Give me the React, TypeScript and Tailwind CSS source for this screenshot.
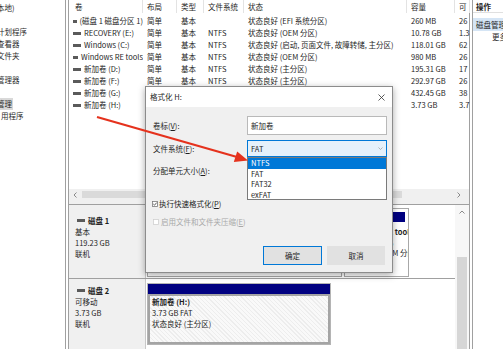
import React from 'react';

const rows: string[][] = [
  ['(磁盘 1 磁盘分区 1)', '简单', '基本', '', '状态良好 (EFI 系统分区)', '260 MB', '26'],
  ['RECOVERY (E:)', '简单', '基本', 'NTFS', '状态良好 (OEM 分区)', '10.78 GB', '1.3'],
  ['Windows (C:)', '简单', '基本', 'NTFS', '状态良好 (启动, 页面文件, 故障转储, 主分区)', '118.01 GB', '62'],
  ['Windows RE tools', '简单', '基本', 'NTFS', '状态良好 (OEM 分区)', '980 MB', '26'],
  ['新加卷 (D:)', '简单', '基本', 'NTFS', '状态良好 (主分区)', '195.31 GB', '17'],
  ['新加卷 (F:)', '简单', '基本', 'NTFS', '状态良好 (主分区)', '292.97 GB', '26'],
  ['新加卷 (G:)', '简单', '基本', 'NTFS', '状态良好 (主分区)', '432.45 GB', '38'],
  ['新加卷 (H:)', '简单', '基本', 'NTFS', '状态良好 (主分区)', '3.73 GB', '3.7'],
];

const headers = ['卷', '布局', '类型', '文件系统', '状态', '容量', '可'];

const treeItems = ['本地)', '', '计划程序', '查看器', '文件夹', '', '管理器', '', '管理', '用程序'];

function TreePane() {
  return (
    <div className="w-[65px] shrink-0 overflow-hidden pt-[2px] text-[#2a2a2a]">
      {treeItems.map((t, i) => (
        <div key={i} className="h-[12px] whitespace-nowrap">
          {t && (
            <span className={`inline-block ${i === 9 ? 'ml-[1px]' : '-ml-[3px]'} ${i === 8 ? 'bg-[#d9d9d9] pr-[1px]' : ''}`}>
              {t}
            </span>
          )}
        </div>
      ))}
    </div>
  );
}

function DiskIcon() {
  return <span className="inline-block w-[8px] h-[3px] bg-[#5a5a5a] mr-[3px] align-middle" />;
}

function VolumeList() {
  return (
    <>
      {/* Column headers */}
      <div className="h-[13px] grid grid-cols-[74px_34px_27px_40px_163px_48px_15px]">
        {headers.map((h, i) => (
          <div key={h} className={`border-r border-[#e3e3e3] leading-[13px] whitespace-nowrap overflow-hidden ${i === 0 ? 'pl-[6px]' : 'pl-[4px]'}`}>
            {h}
          </div>
        ))}
      </div>

      {/* Rows */}
      <div className="h-[176px] pt-[2px]">
        {rows.map((r, ri) => (
          <div key={ri} className="h-[12px] grid grid-cols-[74px_34px_27px_40px_163px_48px_15px]">
            {r.map((c, ci) => (
              <div key={ci} className="pl-[4px] whitespace-nowrap overflow-hidden flex items-center">
                {ci === 0 && <DiskIcon />}
                <span>{c}</span>
              </div>
            ))}
          </div>
        ))}
      </div>

      {/* Horizontal scrollbar */}
      <div className="h-[11px] bg-[#f0f0f0] flex items-center px-[4px] gap-[5px]">
        <svg width="4" height="6" viewBox="0 0 4 6">
          <path d="M3.5 0.5 L1 3 L3.5 5.5" fill="none" stroke="#8a8a8a" strokeWidth="1" />
        </svg>
        <div className="h-[7px] w-[320px] bg-[#dadada]" />
        <div className="flex-1" />
        <svg width="4" height="6" viewBox="0 0 4 6" className="mr-[4px]">
          <path d="M0.5 0.5 L3 3 L0.5 5.5" fill="none" stroke="#8a8a8a" strokeWidth="1" />
        </svg>
      </div>
      <div className="h-[5px] bg-[#f0f0f0] border-b border-[#a0a0a0]" />
    </>
  );
}

function DiskLabel({ name, lines, pt }: { name: string; lines: string[]; pt: string }) {
  return (
    <div className={`w-[77px] shrink-0 bg-[#f0f0f0] border-r border-[#c8c8c8] pl-[6px] ${pt} leading-[11px]`}>
      <div className="font-bold flex items-center pl-[2px]">
        <DiskIcon />
        <span>{name}</span>
      </div>
      {lines.map((l) => (
        <div key={l}>{l}</div>
      ))}
    </div>
  );
}

function DiskPane() {
  return (
    <div className="flex-1 flex min-h-0">
      <div className="flex-1 flex flex-col">
        {/* Disk 1 */}
        <div className="h-[74px] flex border-b border-[#a0a0a0] bg-white">
          <DiskLabel name="磁盘 1" lines={['基本', '119.23 GB', '联机']} pt="pt-[10px]" />
          <div className="flex pt-[3px] pb-[1px] pl-[1px] gap-[2px]">
            <div className="w-[195px] border border-[#a8a8a8] p-[3px]">
              <div className="h-[10px] bg-[#000080]" />
            </div>
            <div className="w-[65px] border border-[#a8a8a8] p-[3px] overflow-hidden">
              <div className="h-[10px] bg-[#000080]" />
              <div className="pt-[5px] leading-[10.5px] whitespace-nowrap">
                <div className="font-bold">Windows RE tools</div>
                <div>980 MB NTFS</div>
                <div>状态良好 (OEM 分区)</div>
              </div>
            </div>
          </div>
        </div>

        {/* Disk 2 */}
        <div className="flex-1 flex bg-white">
          <DiskLabel name="磁盘 2" lines={['可移动', '3.73 GB', '联机']} pt="pt-[6px]" />
          <div className="pt-[4px] pb-[4px] pl-[1px]">
            <div className="w-[184px] h-full border border-[#b4b4b4] flex flex-col">
              <div className="h-[10px] bg-[#000080] shrink-0" />
              <div className="flex-1 border-2 border-[#a4a4a4] pl-[2px] leading-[11px] bg-[repeating-linear-gradient(45deg,#ededed_0px,#ededed_1px,#f9f9f9_1px,#f9f9f9_3px)]">
                <div className="font-bold">新加卷 (H:)</div>
                <div>3.73 GB FAT</div>
                <div>状态良好 (主分区)</div>
              </div>
            </div>
          </div>
        </div>
      </div>

      {/* Vertical scrollbar */}
      <div className="w-[14px] bg-[#f7f7f7] flex flex-col items-center pt-[5px]">
        <svg width="6" height="4" viewBox="0 0 6 4">
          <path d="M0.5 3.5 L3 1 L5.5 3.5" fill="none" stroke="#8a8a8a" strokeWidth="1" />
        </svg>
        <div className="mt-[43px] w-[10px] flex-1 bg-[#d6d6d6]" />
      </div>
    </div>
  );
}

function MainPane() {
  return (
    <div className="w-[406px] shrink-0 flex border-l border-[#a0a0a0] pl-[2px]">
      <div className="w-[402px] flex flex-col border-l border-r border-[#a0a0a0]">
        <VolumeList />
        <DiskPane />
      </div>
    </div>
  );
}

function ActionPane() {
  return (
    <div className="ml-[1px] w-[31px] border-l border-[#a0a0a0] overflow-hidden whitespace-nowrap">
      <div className="h-[13px] leading-[13px] pl-[3px] font-bold border-b border-[#e0e0e0]">操作</div>
      <div className="mt-[5px] h-[13px] leading-[13px] pl-[3px] bg-[#d5e5f5]">磁盘管理</div>
      <div className="h-[12px] pl-[19px]">更多操作</div>
    </div>
  );
}

function CheckBox({ checked, disabled }: { checked?: boolean; disabled?: boolean }) {
  return (
    <svg width="6" height="6" viewBox="0 0 6 6" className="shrink-0">
      <rect x="0.5" y="0.5" width="5" height="5" fill="white" stroke={disabled ? '#d0d0d0' : '#7a7a7a'} strokeWidth="0.8" />
      {checked && <path d="M1.3 3 L2.5 4.2 L4.7 1.6" fill="none" stroke="#333" strokeWidth="0.8" />}
    </svg>
  );
}

function FormatDialog() {
  return (
    <div className="absolute left-[145px] top-[86px] w-[248px] h-[187px] border border-[#8c8c8c] bg-[#f0f0f0] shadow-[0_2px_7px_rgba(0,0,0,0.35)] flex flex-col">
      {/* Title bar */}
      <div className="h-[20px] shrink-0 bg-white flex items-center justify-between pl-[4px] pr-[7px]">
        <span>格式化 H:</span>
        <svg width="7" height="7" viewBox="0 0 7 7">
          <path d="M0.5 0.5 L6.5 6.5 M6.5 0.5 L0.5 6.5" stroke="#333" strokeWidth="0.8" />
        </svg>
      </div>

      <div className="relative flex-1 pl-[7px] pr-[5px]">
        <div className="mt-[9px] h-[19px] flex items-center">
          <div className="w-[94px]">卷标(<u>V</u>):</div>
          <div className="w-[140px] h-full bg-white border border-[#b9b9b9] pl-[3px] flex items-center">新加卷</div>
        </div>

        <div className="mt-[5px] h-[17px] flex items-center">
          <div className="w-[94px]">文件系统(<u>F</u>):</div>
          <div className="w-[140px] h-full bg-[#e5f1fb] border border-[#0078d7] pl-[3px] pr-[3px] flex items-center justify-between">
            <span>FAT</span>
            <svg width="5" height="3" viewBox="0 0 5 3">
              <path d="M0.5 0.5 L2.5 2.5 L4.5 0.5" fill="none" stroke="#9a9a9a" strokeWidth="0.7" />
            </svg>
          </div>
        </div>

        <div className="mt-[8px] h-[12px] flex items-center">分配单元大小(<u>A</u>):</div>

        <div className="mt-[21px] h-[12px] flex items-center gap-[1px] -ml-[1px]">
          <CheckBox checked />
          <span>执行快速格式化(<u>P</u>)</span>
        </div>

        <div className="mt-[6px] h-[12px] flex items-center gap-[2px] text-[#a8a8a8]">
          <CheckBox disabled />
          <span>启用文件和文件夹压缩(<u>E</u>)</span>
        </div>

        <div className="mt-[18px] h-[19px] flex justify-end gap-[5px] mr-[2px]">
          <div className="w-[59px] h-full bg-[#e1e1e1] border border-[#0078d7] flex items-center justify-center">确定</div>
          <div className="w-[58px] h-full bg-[#e1e1e1] border border-[#e1e1e1] flex items-center justify-center">取消</div>
        </div>

        {/* Open drop-down of the file system box */}
        <div className="absolute left-[101px] top-[50px] w-[140px] h-[43px] bg-white border border-[#7a7a7a] leading-[10.5px]">
          <div className="bg-[#0078d7] text-white pl-[3px]">NTFS</div>
          <div className="pl-[3px]">FAT</div>
          <div className="pl-[3px]">FAT32</div>
          <div className="pl-[3px]">exFAT</div>
        </div>
      </div>
    </div>
  );
}

function Arrow() {
  return (
    <svg className="absolute left-0 top-0 pointer-events-none" width="503" height="349" viewBox="0 0 503 349">
      <line x1="97" y1="117" x2="237" y2="157" stroke="#e5321d" strokeWidth="2.2" />
      <polygon points="248,160.5 233.8,162 237.2,151.6" fill="#e5321d" />
    </svg>
  );
}

export default function App() {
  return (
    <div className="relative w-[503px] h-[349px] overflow-hidden bg-white font-['Noto_Sans_CJK_SC',sans-serif] text-[7.5px] leading-[12px] text-[#1e1e1e]">
      <div className="flex h-full">
        <TreePane />
        <MainPane />
        <ActionPane />
      </div>
      <FormatDialog />
      <Arrow />
    </div>
  );
}
